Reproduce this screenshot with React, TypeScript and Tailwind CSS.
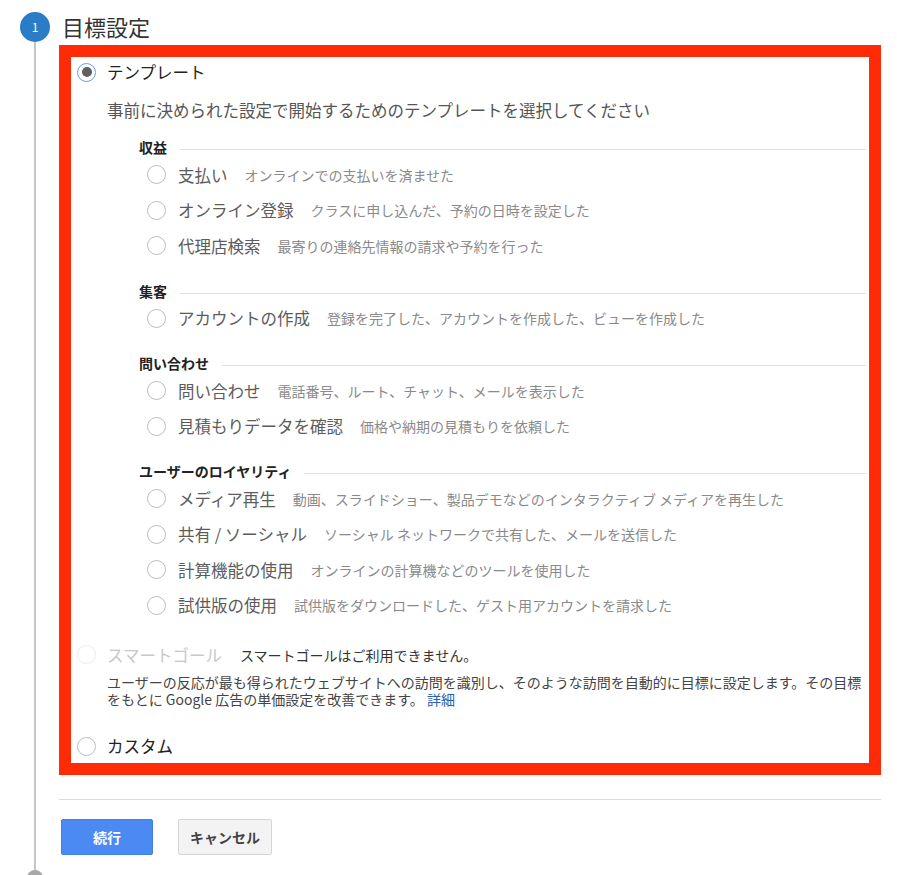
import React from 'react'

const FONT = '"Noto Sans CJK JP", "Noto Sans", sans-serif'

type Item = [string, string]

const SECTIONS: { title: string; items: Item[] }[] = [
  {
    title: '収益',
    items: [
      ['支払い', 'オンラインでの支払いを済ませた'],
      ['オンライン登録', 'クラスに申し込んだ、予約の日時を設定した'],
      ['代理店検索', '最寄りの連絡先情報の請求や予約を行った'],
    ],
  },
  {
    title: '集客',
    items: [['アカウントの作成', '登録を完了した、アカウントを作成した、ビューを作成した']],
  },
  {
    title: '問い合わせ',
    items: [
      ['問い合わせ', '電話番号、ルート、チャット、メールを表示した'],
      ['見積もりデータを確認', '価格や納期の見積もりを依頼した'],
    ],
  },
  {
    title: 'ユーザーのロイヤリティ',
    items: [
      ['メディア再生', '動画、スライドショー、製品デモなどのインタラクティブ メディアを再生した'],
      ['共有 / ソーシャル', 'ソーシャル ネットワークで共有した、メールを送信した'],
      ['計算機能の使用', 'オンラインの計算機などのツールを使用した'],
      ['試供版の使用', '試供版をダウンロードした、ゲスト用アカウントを請求した'],
    ],
  },
]

/** Plain radio circle; `on` adds the blue ring + dark dot, `disabled` fades it. */
function Radio({ state = 'off' }: { state?: 'off' | 'on' | 'disabled' }) {
  if (state === 'on') {
    return (
      <span className="flex h-[19px] w-[19px] shrink-0 items-center justify-center rounded-full border-[1.5px] border-[#6b9be0]">
        <span className="h-[10px] w-[10px] rounded-full bg-[#5f5f5f]" />
      </span>
    )
  }
  return (
    <span
      className={
        state === 'disabled'
          ? 'h-[19px] w-[19px] shrink-0 rounded-full border-[1.5px] border-[#ececec]'
          : 'h-[19px] w-[19px] shrink-0 rounded-full border-[1.5px] border-[#bdbdbd]'
      }
    />
  )
}

function Section({ title, items, first }: { title: string; items: Item[]; first?: boolean }) {
  return (
    <div className={first ? '' : 'mt-[17px]'}>
      <div className="flex h-[20px] items-center">
        <span className="text-[14px] font-bold leading-[20px] text-[#222]">{title}</span>
        <span className="ml-[13px] mt-[5px] h-px flex-1 bg-[#e0e0e0]" />
      </div>
      {items.map(([label, desc]) => (
        <div key={label} className="flex h-[35.5px] items-center pl-[8px]">
          <Radio />
          <span className="ml-[12px] whitespace-nowrap text-[16.5px] leading-[20px] text-[#5c5c5c]">{label}</span>
          <span className="ml-[17px] whitespace-nowrap text-[14px] leading-[20px] text-[#8a8a8a]">{desc}</span>
        </div>
      ))}
    </div>
  )
}

export default function App() {
  return (
    <div className="flex h-[875px] w-[897px] overflow-hidden bg-white" style={{ fontFamily: FONT }}>
      {/* stepper rail */}
      <div className="flex w-[59px] shrink-0 flex-col items-start pl-[20px]">
        <div className="mt-[12px] flex h-[30px] w-[30px] shrink-0 items-center justify-center rounded-full bg-[#2a7cc7] text-[12px] leading-none text-white">
          1
        </div>
        <div className="ml-[14px] h-[828px] w-[2px] shrink-0 bg-[#c6c6c6]" />
        <div className="ml-[7px] h-[16px] w-[16px] shrink-0 rounded-full bg-[#a8a8a8]" />
      </div>

      <div className="w-[822px] shrink-0">
        <h1 className="mt-[11px] pl-[3px] text-[22px] font-normal leading-[30px] text-[#333]">目標設定</h1>

        <div className="mt-[4px] h-[730px] border-[12px] border-[#ff2b06] bg-white">
          <div className="-mt-[1px] pl-[6px] pr-[3px]">
            <div className="flex h-[32px] items-center">
              <Radio state="on" />
              <span className="ml-[11px] text-[16.5px] leading-[20px] text-[#222]">テンプレート</span>
            </div>
            <p className="ml-[30px] mt-[12px] text-[16.5px] leading-[20px] text-[#555]">
              事前に決められた設定で開始するためのテンプレートを選択してください
            </p>

            <div className="ml-[62px] mt-[17px]">
              {SECTIONS.map((s, i) => (
                <Section key={s.title} title={s.title} items={s.items} first={i === 0} />
              ))}
            </div>

            <div className="mt-[15.5px] flex h-[32px] items-center">
              <Radio state="disabled" />
              <span className="ml-[11px] text-[16.5px] leading-[20px] text-[#c8c8c8]">スマートゴール</span>
              <span className="ml-[18px] text-[14px] leading-[20px] text-[#333]">スマートゴールはご利用できません。</span>
            </div>
            <p className="ml-[30px] mt-[3px] text-[14px] leading-[17px] text-[#444]">
              ユーザーの反応が最も得られたウェブサイトへの訪問を識別し、そのような訪問を自動的に目標に設定します。その目標をもとに Google 広告の単価設定を改善できます。 <span className="text-[#2a5fae]">詳細</span>
            </p>

            <div className="mt-[22.5px] flex h-[32px] items-center">
              <Radio />
              <span className="ml-[11px] text-[16.5px] leading-[20px] text-[#222]">カスタム</span>
            </div>
          </div>
        </div>

        <div className="mt-[24px] h-px bg-[#dcdcdc]" />

        <div className="mt-[19px] flex gap-[25px] pl-[2px]">
          <button
            type="button"
            className="h-[36px] w-[92px] rounded-[2px] border border-[#3f7fe6] bg-[#4a8af2] text-[14px] font-bold text-white"
          >
            続行
          </button>
          <button
            type="button"
            className="h-[36px] w-[94px] rounded-[2px] border border-[#d6d6d6] bg-[#f3f3f3] text-[14px] font-bold text-[#444]"
          >
            キャンセル
          </button>
        </div>
      </div>
    </div>
  )
}
